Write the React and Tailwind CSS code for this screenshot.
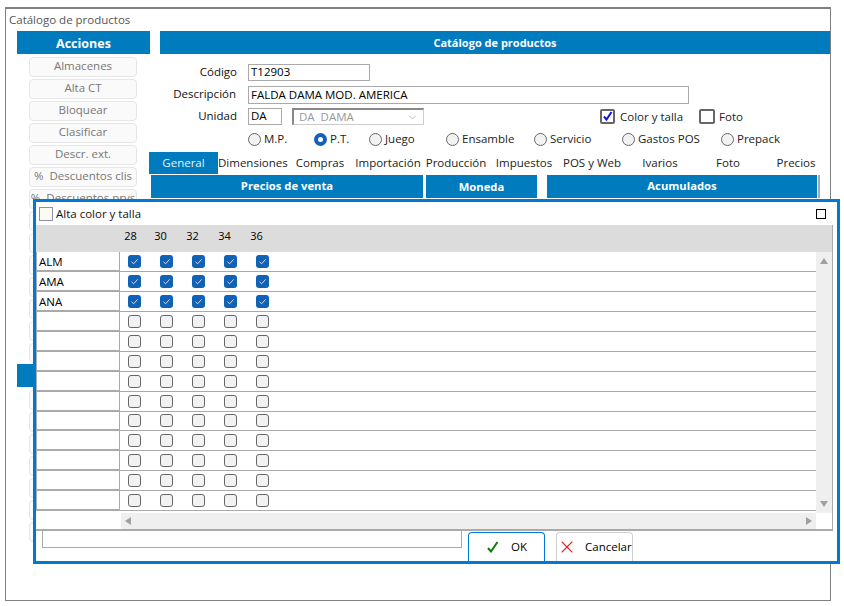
import { X, ChevronDown } from 'lucide-react'

const topActions = ['Almacenes', 'Alta CT', 'Bloquear', 'Clasificar', 'Descr. ext.', '%  Descuentos clis', '%  Descuentos prvs', '', '', '', '', '', '', '']
const bottomActions = ['', '', '', '', '', '', '']
const tabs = ['General', 'Dimensiones', 'Compras', 'Importación', 'Producción', 'Impuestos', 'POS y Web', 'Ivarios', 'Foto', 'Precios']
const types = [
  { label: 'M.P.', w: 'w-[66px]' },
  { label: 'P.T.', w: 'w-[55px]' },
  { label: 'Juego', w: 'w-[77px]' },
  { label: 'Ensamble', w: 'w-[88px]' },
  { label: 'Servicio', w: 'w-[88px]' },
  { label: 'Gastos POS', w: 'w-[99px]' },
  { label: 'Prepack', w: 'w-[70px]' },
]
const sizes = ['28', '30', '32', '34', '36']
const rows = ['ALM', 'AMA', 'ANA', '', '', '', '', '', '', '', '', '', '']

function ActionButton({ label }) {
  return (
    <div className="h-[20px] mb-[2px] mx-[12px] w-[108px] rounded-[4px] border border-[#e6e6e6] bg-[#fafafa] text-[#777] text-center leading-[15px] whitespace-pre overflow-hidden">
      {label}
    </div>
  )
}

function Radio({ label, w, checked }) {
  return (
    <div className={`flex items-center gap-[3px] ${w}`}>
      {checked ? (
        <span className="w-[13px] h-[13px] rounded-full bg-[#0f62b8] flex items-center justify-center">
          <span className="w-[5px] h-[5px] rounded-full bg-white" />
        </span>
      ) : (
        <span className="w-[13px] h-[13px] rounded-full border border-[#666] bg-[#f2f2f2]" />
      )}
      <span className="text-[#222] pb-[2px]">{label}</span>
    </div>
  )
}

function CellCheck({ on }) {
  return (
    <div className="w-[32px] flex justify-center">
      {on ? (
        <span className="w-[13px] h-[13px] rounded-[3px] bg-[#0f62b8] flex items-center justify-center">
          <svg width="9" height="9" viewBox="0 0 9 9" fill="none" stroke="#cfe0f5" strokeWidth="1">
            <path d="M1.5 4.8L3.6 6.8L7.6 2.4" />
          </svg>
        </span>
      ) : (
        <span className="w-[13px] h-[13px] rounded-[3px] border border-[#666] bg-[#f2f2f2]" />
      )}
    </div>
  )
}

function GridRow({ name, on }) {
  return (
    <div className="flex h-[20px]">
      <div className="w-[84px] border-l border-r border-[#aaa] border-b-2 border-b-[#aaa] pl-[2px] leading-[19px] text-black">{name}</div>
      <div className="flex-1 flex items-center border-b border-[#aaa]">
        <div className="flex -ml-[1.5px]">
          {sizes.map((s) => <CellCheck key={s} on={on} />)}
        </div>
      </div>
    </div>
  )
}

function Modal() {
  return (
    <div className="absolute left-[33px] top-[199px] w-[807px] h-[365px] border-[3px] border-[#0078d4] bg-white flex flex-col">
      <div className="h-[23px] shrink-0 flex items-center pl-[3px] pr-[11px]">
        <span className="w-[14px] h-[14px] border border-[#8c8fb0] bg-[#fbfbf4] mr-[3px]" />
        <span className="text-[#111]">Alta color y talla</span>
        <span className="ml-auto w-[10px] h-[10px] border border-black" />
      </div>
      <div className="w-[797px] h-[306px] shrink-0 border-r border-b-2 border-[#aaa] flex flex-col">
        <div className="h-[27px] shrink-0 bg-[#dcdcdc] flex pl-[76.5px] pt-[3px] text-[11px] text-black">
          {sizes.map((s, i) => <div key={s} className={`w-[32px] text-center ${i === 0 ? 'pl-[4px]' : ''}`}>{s}</div>)}
        </div>
        <div className="flex flex-1 min-h-0">
          <div className="w-[780px] flex flex-col">
            {rows.map((r, i) => <GridRow key={i} name={r} on={i < 3} />)}
            <div className="flex mt-[2px]">
              <div className="w-[85px]" />
              <div className="flex-1 h-[16px] bg-[#efefef] flex items-center justify-between px-[4px]">
                <span className="w-0 h-0 border-y-[4px] border-y-transparent border-r-[6px] border-r-[#a0a0a0]" />
                <span className="w-0 h-0 border-y-[4px] border-y-transparent border-l-[6px] border-l-[#a0a0a0]" />
              </div>
            </div>
          </div>
          <div className="w-[16px] h-[261px] bg-[#efefef] flex flex-col items-center justify-between py-[6px]">
            <span className="w-0 h-0 border-x-[4px] border-x-transparent border-b-[6px] border-b-[#a0a0a0]" />
            <span className="w-0 h-0 border-x-[4px] border-x-transparent border-t-[6px] border-t-[#a0a0a0]" />
          </div>
        </div>
      </div>
      <div className="flex flex-1 pl-[6px]">
        <div className="w-[420px] h-[17px] border border-[#aaa] border-t-0" />
        <div className="ml-[6px] mt-[1px] w-[77px] rounded-t-[4px] border border-b-0 border-[#0078d4] flex items-center pl-[18px] text-black">
          <svg width="12" height="12" viewBox="0 0 12 12" fill="none" stroke="#0a7d0a" strokeWidth="2" className="mr-[12px]">
            <path d="M1 7L4 10.5L10.5 1" />
          </svg>
          OK
        </div>
        <div className="ml-[11px] mt-[1px] w-[77px] rounded-t-[4px] border border-b-0 border-[#cfcfcf] flex items-center text-black">
          <X size={20} strokeWidth={1.3} className="text-[#d92b2b] mr-[8px]" />
          Cancelar
        </div>
      </div>
    </div>
  )
}

export default function App() {
  return (
    <div className="relative w-[844px] h-[606px] bg-white overflow-hidden text-[11.5px] text-[#222]" style={{ fontFamily: '"Open Sans", "Noto Sans", sans-serif' }}>
      <div className="absolute left-[5px] top-[7px] w-[826px] h-[594px] border border-[#808080] border-t-2">
        <div className="h-[22px] pl-[3px] pt-[3px] leading-[16px] text-[#555]">Catálogo de productos</div>
        <div className="flex">
          <div className="w-[133px] ml-[11px] shrink-0">
            <div className="h-[23px] mb-[3px] bg-[#007bbd] text-white text-[12.5px] font-bold text-center leading-[25px]">Acciones</div>
            {topActions.map((a, i) => <ActionButton key={i} label={a} />)}
            <div className="h-[23px] -mt-[1px] mb-[3px] bg-[#007bbd]" />
            {bottomActions.map((a, i) => <ActionButton key={i} label={a} />)}
          </div>
          <div className="ml-[10px] flex-1 min-w-0">
            <div className="h-[23px] bg-[#007bbd] text-white text-[11px] font-bold text-center leading-[24px]">Catálogo de productos</div>
            <div className="flex items-center mt-[10px] h-[17px]">
              <div className="w-[77px] text-right text-[#111] pb-[2px]">Código</div>
              <div className="ml-[11px] w-[122px] h-[17px] border border-[#aaa] pl-[2px] leading-[14px] text-black">T12903</div>
            </div>
            <div className="flex items-center mt-[5px] h-[18px]">
              <div className="w-[76px] text-right text-[#111] pb-[2px]">Descripción</div>
              <div className="ml-[12px] w-[441px] h-[18px] border border-[#aaa] pl-[2px] leading-[15px] text-black">FALDA DAMA MOD. AMERICA</div>
            </div>
            <div className="flex items-center mt-[4px] h-[17px]">
              <div className="w-[77px] text-right text-[#111] pb-[2px]">Unidad</div>
              <div className="ml-[11px] w-[34px] h-[17px] border border-[#aaa] pl-[2px] leading-[14px] text-black">DA</div>
              <div className="ml-[10px] w-[132px] h-[17px] border border-[#ccc] border-l-2 border-t-2 border-l-[#888] border-t-[#888] pl-[5px] pr-[4px] flex items-center justify-between text-[#999] whitespace-pre">
                DA  DAMA
                <ChevronDown size={13} strokeWidth={1} className="text-[#888]" />
              </div>
              <div className="ml-[176px] flex items-center">
                <span className="w-[15px] h-[15px] rounded-[2px] border-2 border-[#666] flex items-center justify-center">
                  <svg width="11" height="11" viewBox="0 0 11 11" fill="none" stroke="#1414e6" strokeWidth="2">
                    <path d="M2 5.5L4.5 8.5L9.5 1" />
                  </svg>
                </span>
                <span className="ml-[5px]">Color y talla</span>
                <span className="ml-[16px] w-[16px] h-[15px] rounded-[2px] border-2 border-[#666]" />
                <span className="ml-[4px]">Foto</span>
              </div>
            </div>
            <div className="flex items-center mt-[6px] ml-[88px] h-[17px]">
              {types.map((t) => <Radio key={t.label} label={t.label} w={t.w} checked={t.label === 'P.T.'} />)}
            </div>
            <div className="grid grid-cols-[69px_repeat(9,68px)] -ml-[11px] mt-[4px] h-[21px] leading-[22px] text-center whitespace-nowrap">
              {tabs.map((t, i) => (
                <div key={t} className={i === 0 ? 'bg-[#007bbd] text-[#e8f2fa]' : 'text-[#222]'}>{t}</div>
              ))}
            </div>
            <div className="flex -ml-[9px] mt-[2px] w-[669px] h-[23px] text-white text-[11.25px] font-bold text-center leading-[22px] border-r-2 border-[#aaa]">
              <div className="w-[272px] bg-[#007bbd]">Precios de venta</div>
              <div className="ml-[3px] w-[111px] bg-[#007bbd] leading-[24px]">Moneda</div>
              <div className="ml-[10px] w-[270px] bg-[#007bbd]">Acumulados</div>
            </div>
          </div>
        </div>
      </div>
      <Modal />
    </div>
  )
}
